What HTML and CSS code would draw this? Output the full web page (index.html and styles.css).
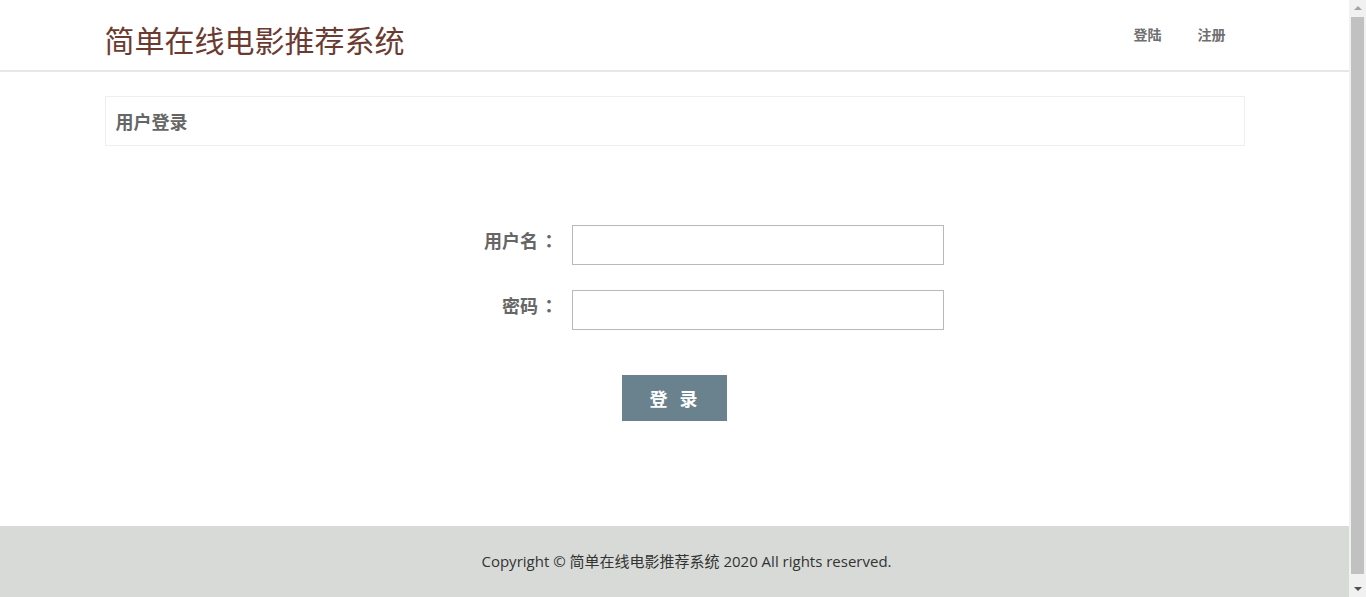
FILE: index.html
```html
<!DOCTYPE html>
<html lang="zh-CN">
<head>
    <meta charset="UTF-8">
    <meta name="viewport" content="width=device-width, initial-scale=1.0">
    <title>用户登录 - 简单在线电影推荐系统</title>
    <link rel="stylesheet" href="styles.css">
</head>
<body>
    <header class="site-header">
        <div class="container header-inner">
            <a class="brand" href="#">简单在线电影推荐系统</a>
            <nav class="nav">
                <a href="#">登陆</a>
                <a href="#">注册</a>
            </nav>
        </div>
    </header>

    <main class="container">
        <div class="panel-title">用户登录</div>

        <form class="login-form">
            <div class="form-row">
                <label for="username">用户名<span class="colon">：</span></label>
                <input type="text" id="username">
            </div>
            <div class="form-row">
                <label for="password">密码<span class="colon">：</span></label>
                <input type="password" id="password">
            </div>
            <div class="form-actions">
                <button type="button">登 录</button>
            </div>
        </form>
    </main>

    <footer class="site-footer">
        Copyright &copy; 简单在线电影推荐系统 2020 All rights reserved.
    </footer>

    <!-- window scrollbar, drawn over the right edge -->
    <div class="scrollbar">
        <span class="arrow arrow-up"></span>
        <span class="thumb"></span>
        <span class="arrow arrow-down"></span>
    </div>
</body>
</html>
```

FILE: styles.css
```css
body {
    margin: 0;
    width: 1349px;
    font-family: "Noto Sans CJK SC", "Open Sans", sans-serif;
    color: #333;
    background-color: #fff;
}

a {
    text-decoration: none;
}

.container {
    width: 1140px;
    margin: 0 auto;
}

.site-header {
    height: 70px;
    border-bottom: 2px solid #e7e7e7;
}

.header-inner {
    display: flex;
    align-items: center;
    justify-content: space-between;
    height: 100%;
}

.brand {
    font-size: 30px;
    color: #6b3b32;
    line-height: 1;
    margin-top: 7px;
}

.nav {
    display: flex;
    gap: 36px;
    margin-right: 19px;
    margin-bottom: 2px;
}

.nav a {
    font-size: 14px;
    font-weight: bold;
    color: #6f6f6f;
}

.panel-title {
    margin-top: 24px;
    height: 48px;
    line-height: 48px;
    padding-left: 10px;
    border: 1px solid #eeeeee;
    font-size: 18px;
    font-weight: bold;
    color: #666;
}

.login-form {
    width: 539px;
    margin: 79px auto 0;
}

.form-row {
    display: flex;
    align-items: center;
    margin-bottom: 25px;
}

.form-row label {
    width: 154px;
    margin-right: 13px;
    text-align: right;
    font-size: 18px;
    font-weight: bold;
    color: #666;
    margin-top: -10px;
}

.colon {
    display: inline-block;
    width: 20px;
    margin-left: 1px;
    text-align: center;
    font-family: "Noto Sans CJK JP", sans-serif;
}

.form-row input {
    width: 372px;
    height: 40px;
    box-sizing: border-box;
    border: 1px solid #bbb8bb;
    padding: 0 10px;
    font-size: 16px;
}

.form-actions {
    text-align: center;
    padding-top: 20px;
}

.form-actions button {
    width: 105px;
    height: 46px;
    border: none;
    background-color: #6a818e;
    color: #fff;
    font-family: "Noto Sans CJK SC", sans-serif;
    font-size: 18px;
    font-weight: bold;
    letter-spacing: 4px;
    padding-left: 8px;
    cursor: pointer;
}

.site-footer {
    margin-top: 105px;
    background-color: #d8dad7;
    padding: 24px 0 36px 24px;
    text-align: center;
    font-family: "Open Sans", "Noto Sans CJK SC", sans-serif;
    font-size: 15px;
    color: #333;
}

.scrollbar {
    position: fixed;
    top: 0;
    right: 0;
    width: 17px;
    height: 100vh;
    background-color: #f1f1f1;
    display: flex;
    flex-direction: column;
    align-items: center;
}

.arrow {
    width: 0;
    height: 0;
    border-left: 4px solid transparent;
    border-right: 4px solid transparent;
}

.arrow-up {
    margin-top: 6px;
    border-bottom: 4px solid #a3a3a3;
}

.arrow-down {
    margin-bottom: 6px;
    border-top: 4px solid #505050;
}

.thumb {
    width: 13px;
    flex: 1;
    margin: 7px 0 13px;
    background-color: #c1c1c1;
}
```
